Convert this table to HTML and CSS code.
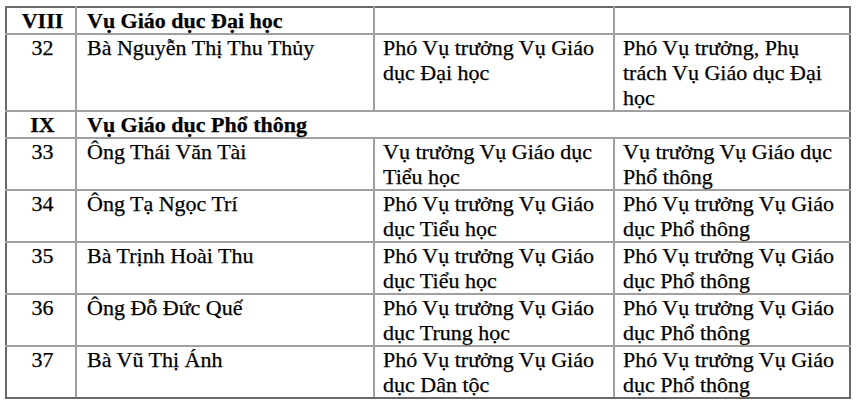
FILE: index.html
```html
<!DOCTYPE html>
<html lang="vi">
<head>
<meta charset="utf-8">
<title>Danh sách</title>
<link rel="stylesheet" href="styles.css">
</head>
<body>
<table class="list">
  <colgroup>
    <col class="c-no">
    <col class="c-name">
    <col class="c-old">
    <col class="c-new">
  </colgroup>
  <tbody>
    <tr class="group">
      <td class="no">VIII</td>
      <td class="name">Vụ Giáo dục Đại học</td>
      <td></td>
      <td class="last"></td>
    </tr>
    <tr>
      <td class="no">32</td>
      <td class="name">Bà Nguyễn Thị Thu Thủy</td>
      <td>Phó Vụ trưởng Vụ Giáo dục Đại học</td>
      <td class="last">Phó Vụ trưởng, Phụ trách Vụ Giáo dục Đại học</td>
    </tr>
    <tr class="group">
      <td class="no">IX</td>
      <td class="name last" colspan="3">Vụ Giáo dục Phổ thông</td>
    </tr>
    <tr>
      <td class="no">33</td>
      <td class="name">Ông Thái Văn Tài</td>
      <td>Vụ trưởng Vụ Giáo dục Tiểu học</td>
      <td class="last">Vụ trưởng Vụ Giáo dục Phổ thông</td>
    </tr>
    <tr>
      <td class="no">34</td>
      <td class="name">Ông Tạ Ngọc Trí</td>
      <td>Phó Vụ trưởng Vụ Giáo dục Tiểu học</td>
      <td class="last">Phó Vụ trưởng Vụ Giáo dục Phổ thông</td>
    </tr>
    <tr>
      <td class="no">35</td>
      <td class="name">Bà Trịnh Hoài Thu</td>
      <td>Phó Vụ trưởng Vụ Giáo dục Tiểu học</td>
      <td class="last">Phó Vụ trưởng Vụ Giáo dục Phổ thông</td>
    </tr>
    <tr>
      <td class="no">36</td>
      <td class="name">Ông Đỗ Đức Quế</td>
      <td>Phó Vụ trưởng Vụ Giáo dục Trung học</td>
      <td class="last">Phó Vụ trưởng Vụ Giáo dục Phổ thông</td>
    </tr>
    <tr class="final">
      <td class="no">37</td>
      <td class="name">Bà Vũ Thị Ánh</td>
      <td>Phó Vụ trưởng Vụ Giáo dục Dân tộc</td>
      <td class="last">Phó Vụ trưởng Vụ Giáo dục Phổ thông</td>
    </tr>
  </tbody>
</table>
</body>
</html>
```

FILE: styles.css
```css
html, body {
  margin: 0;
  background: #ffffff;
}

body {
  padding: 6px 0 0 5px;
  font-family: "Liberation Serif", "Times New Roman", serif;
  font-size: 22px;
  color: #000000;
  -webkit-text-stroke: 0.25px #000000;
}

.list {
  border-collapse: collapse;
  table-layout: fixed;
  width: 844px;
}

.c-no { width: 70px; }
.c-name { width: 298px; }
.c-old { width: 240px; }
.c-new { width: 236px; }

.list td {
  border: 2px solid #a0a0a0;
  padding: 0 6px 0 8px;
  line-height: 25px;
  vertical-align: top;
  height: 25px;
}

.list td.no {
  text-align: center;
  padding: 0 0 0 3px;
  border-left-color: #6a6a6a;
}

.list td.name {
  padding-left: 10px;
}

.list td.last {
  border-right-color: #6a6a6a;
}

.list tr:first-child td {
  border-top-color: #6a6a6a;
}

.list tr.final td {
  border-bottom-color: #6a6a6a;
}

.group td {
  font-weight: bold;
}
```
